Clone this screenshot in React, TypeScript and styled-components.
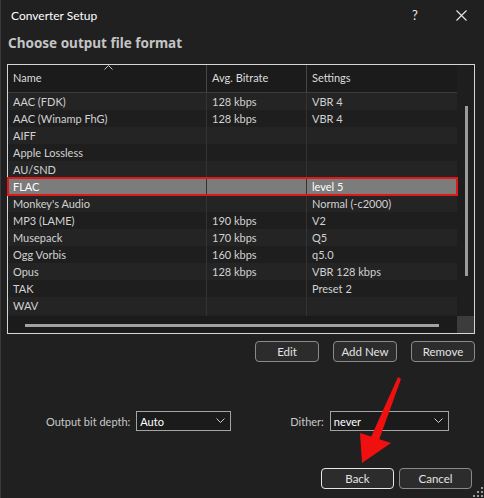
import React from "react";
import styled, { createGlobalStyle } from "styled-components";

const GlobalStyle = createGlobalStyle`
  html, body {
    margin: 0;
    padding: 0;
    background: #202020;
  }
  body {
    font-family: Lato, "Segoe UI", sans-serif;
  }
`;

const Window = styled.div`
  position: relative;
  width: 484px;
  height: 498px;
  box-sizing: border-box;
  background: #202020;
  border-left: 1px solid #3a3a3a;
  display: flex;
  flex-direction: column;
  overflow: hidden;
`;

const TitleBar = styled.div`
  height: 30px;
  display: flex;
  align-items: center;
  padding-left: 10px;
  color: #ffffff;
  font-size: 12px;
`;

const TitleText = styled.span`
  flex: 1;
`;

const TitleButton = styled.div`
  width: 46px;
  height: 30px;
  display: flex;
  align-items: center;
  justify-content: center;
  color: #e8e8e8;
  font-size: 13px;
`;

const Heading = styled.div`
  margin: 3px 0 11px 7px;
  height: 20px;
  line-height: 20px;
  font-family: "Noto Sans", sans-serif;
  font-size: 13.5px;
  font-weight: 700;
  color: #c4c4c4;
`;

const ListBox = styled.div`
  margin: 0 9px 0 6px;
  height: 270px;
  box-sizing: border-box;
  border: 1px solid #d6d6d6;
  display: grid;
  grid-template-columns: 449px 17px;
  grid-template-rows: 251px 17px;
  background: #1c1c1c;
`;

const Table = styled.div`
  display: flex;
  flex-direction: column;
`;

const HeaderRow = styled.div`
  display: grid;
  grid-template-columns: 199px 100px 150px;
  height: 27px;
  border-bottom: 1px solid #3c3c3c;
  background: #1b1b1b;
`;

const HeaderCell = styled.div<{ $last?: boolean }>`
  position: relative;
  display: flex;
  align-items: center;
  padding: 0 0 3px 5px;
  border-right: ${(p) => (p.$last ? "none" : "1px solid #464646")};
  color: #dcdcdc;
  font-size: 11px;
`;

const SortCaret = styled.svg`
  position: absolute;
  top: 0px;
  left: 96px;
`;

const Row = styled.div<{ $alt?: boolean; $selected?: boolean }>`
  position: relative;
  display: grid;
  grid-template-columns: 199px 100px 150px;
  height: 17px;
  background: ${(p) =>
    p.$selected ? "#7c7c7c" : p.$alt ? "#1e1e1e" : "#242424"};
  color: ${(p) => (p.$selected ? "#ffffff" : "#d2d2d2")};
  outline: ${(p) => (p.$selected ? "2px solid #e01818" : "none")};
  outline-offset: -1px;
  z-index: ${(p) => (p.$selected ? 1 : 0)};
`;

const Filler = styled(Row)`
  height: auto;
  flex: 1;
  background: #222222;
`;

const Cell = styled.div<{ $last?: boolean }>`
  padding-left: 5px;
  font-size: 11px;
  line-height: 17px;
  white-space: nowrap;
  overflow: hidden;
  border-right: ${(p) => (p.$last ? "none" : "1px solid #333333")};
`;

const VScroll = styled.div`
  grid-row: 1;
  grid-column: 2;
  background: #1e1e1e;
  padding: 41px 0 40px 8px;
  box-sizing: border-box;
`;

const VThumb = styled.div`
  width: 3px;
  height: 100%;
  background: #9c9c9c;
`;

const HScroll = styled.div`
  background: #1b1b1b;
  padding: 8px 0 0 17px;
  box-sizing: border-box;
`;

const HThumb = styled.div`
  width: 414px;
  height: 3px;
  background: #a2a2a2;
`;

const Corner = styled.div`
  background: #3c3c3c;
`;

const ButtonRow = styled.div<{ $gap: number; $top: number; $right: number }>`
  display: flex;
  justify-content: flex-end;
  gap: ${(p) => p.$gap}px;
  margin-top: ${(p) => p.$top}px;
  padding-right: ${(p) => p.$right}px;
`;

const Button = styled.button<{ $width: number; $focused?: boolean }>`
  width: ${(p) => p.$width}px;
  height: 21px;
  box-sizing: border-box;
  border: 1px solid ${(p) => (p.$focused ? "#e6e6e6" : "#8a8a8a")};
  border-radius: 4px;
  background: #2c2c2c;
  color: #e4e4e4;
  font-family: Lato, "Segoe UI", sans-serif;
  font-size: 11.5px;
  padding: 0;
`;

const OptionsRow = styled.div`
  display: flex;
  align-items: center;
  margin-top: 49px;
  padding-left: 45px;
  height: 20px;
`;

const Label = styled.span<{ $ml?: number }>`
  margin-left: ${(p) => p.$ml ?? 0}px;
  margin-right: 6px;
  color: #c8c8c8;
  font-size: 11px;
`;

const Select = styled.div<{ $width: number }>`
  width: ${(p) => p.$width}px;
  height: 20px;
  box-sizing: border-box;
  border: 1px solid #a4a4a4;
  background: #1b1b1b;
  color: #ffffff;
  font-size: 11px;
  display: flex;
  align-items: center;
  justify-content: space-between;
  padding: 0 5px 0 3px;
`;

const Overlay = styled.svg`
  position: absolute;
  left: 0;
  top: 0;
  pointer-events: none;
`;

const Grip = styled.svg`
  position: absolute;
  right: 1px;
  bottom: 1px;
`;

const formats: [string, string, string][] = [
  ["AAC (FDK)", "128 kbps", "VBR 4"],
  ["AAC (Winamp FhG)", "128 kbps", "VBR 4"],
  ["AIFF", "", ""],
  ["Apple Lossless", "", ""],
  ["AU/SND", "", ""],
  ["FLAC", "", "level 5"],
  ["Monkey's Audio", "", "Normal (-c2000)"],
  ["MP3 (LAME)", "190 kbps", "V2"],
  ["Musepack", "170 kbps", "Q5"],
  ["Ogg Vorbis", "160 kbps", "q5.0"],
  ["Opus", "128 kbps", "VBR 128 kbps"],
  ["TAK", "", "Preset 2"],
  ["WAV", "", ""],
];

const Chevron = () => (
  <svg width="9" height="6" viewBox="0 0 9 6">
    <polyline points="0.5,0.5 4.5,4.5 8.5,0.5" fill="none" stroke="#cfcfcf" strokeWidth="1" />
  </svg>
);

const App = () => {
  return (
    <>
      <GlobalStyle />
      <Window>
        <TitleBar>
          <TitleText>Converter Setup</TitleText>
          <TitleButton>?</TitleButton>
          <TitleButton>
            <svg width="11" height="11" viewBox="0 0 11 11">
              <path d="M0.5 0.5 L10.5 10.5 M10.5 0.5 L0.5 10.5" stroke="#e8e8e8" strokeWidth="1.1" />
            </svg>
          </TitleButton>
        </TitleBar>
        <Heading>Choose output file format</Heading>
        <ListBox>
          <Table>
            <HeaderRow>
              <HeaderCell>
                <SortCaret width="9" height="5" viewBox="0 0 9 5">
                  <polyline points="0.5,4.5 4.5,0.5 8.5,4.5" fill="none" stroke="#c8c8c8" strokeWidth="1" />
                </SortCaret>
                Name
              </HeaderCell>
              <HeaderCell>Avg. Bitrate</HeaderCell>
              <HeaderCell $last>Settings</HeaderCell>
            </HeaderRow>
            {formats.map(([name, rate, settings], i) => (
              <Row key={name} $alt={i % 2 === 1} $selected={name === "FLAC"}>
                <Cell>{name}</Cell>
                <Cell>{rate}</Cell>
                <Cell $last>{settings}</Cell>
              </Row>
            ))}
            <Filler>
              <Cell />
              <Cell />
              <Cell $last />
            </Filler>
          </Table>
          <VScroll>
            <VThumb />
          </VScroll>
          <HScroll>
            <HThumb />
          </HScroll>
          <Corner />
        </ListBox>
        <ButtonRow $gap={14} $top={7} $right={9}>
          <Button $width={64}>Edit</Button>
          <Button $width={64}>Add New</Button>
          <Button $width={64}>Remove</Button>
        </ButtonRow>
        <OptionsRow>
          <Label>Output bit depth:</Label>
          <Select $width={95}>
            Auto
            <Chevron />
          </Select>
          <Label $ml={59}>Dither:</Label>
          <Select $width={119}>
            never
            <Chevron />
          </Select>
        </OptionsRow>
        <ButtonRow $gap={5} $top={37} $right={12}>
          <Button $width={73} $focused>
            Back
          </Button>
          <Button $width={73}>Cancel</Button>
        </ButtonRow>
        <Overlay width="484" height="498" viewBox="0 0 484 498">
          <polygon points="397,377 400,379 378,440 370,437" fill="#f01010" />
          <polygon points="359,433 390,443 361,463" fill="#f01010" />
        </Overlay>
        <Grip width="10" height="10" viewBox="0 0 10 10">
          <rect x="8" y="0" width="2" height="2" fill="#9a9a9a" />
          <rect x="4" y="4" width="2" height="2" fill="#9a9a9a" />
          <rect x="8" y="4" width="2" height="2" fill="#9a9a9a" />
          <rect x="0" y="8" width="2" height="2" fill="#9a9a9a" />
          <rect x="4" y="8" width="2" height="2" fill="#9a9a9a" />
          <rect x="8" y="8" width="2" height="2" fill="#9a9a9a" />
        </Grip>
      </Window>
    </>
  );
};

export default App;
